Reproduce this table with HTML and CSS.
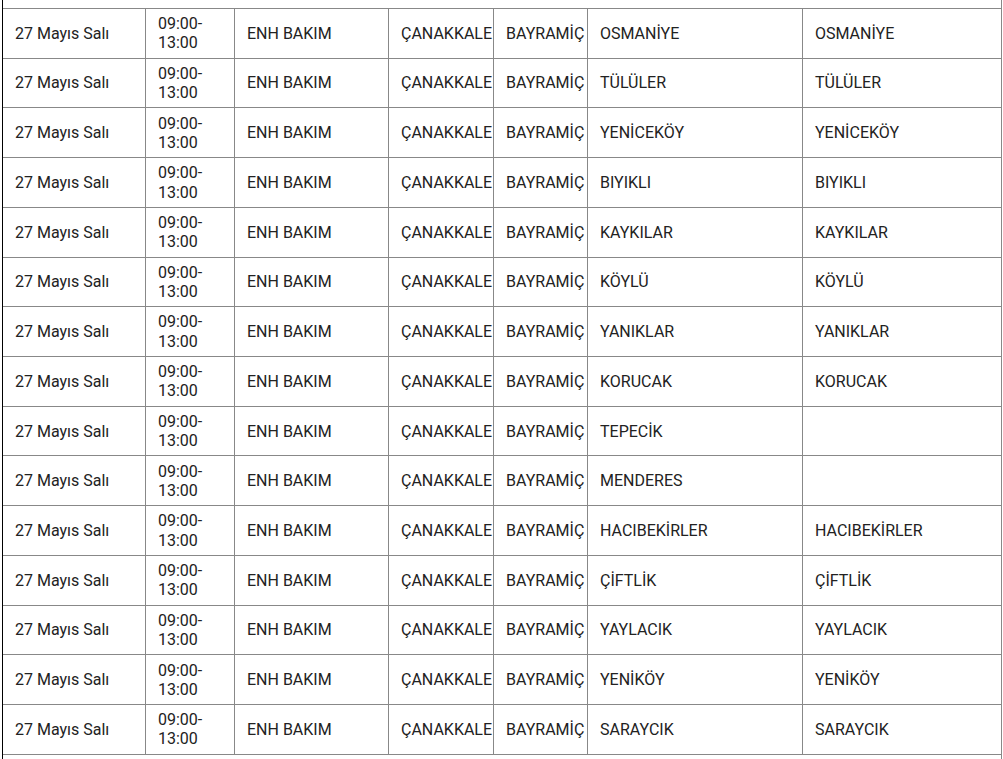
FILE: index.html
```html
<!DOCTYPE html>
<html lang="tr">
<head>
<meta charset="utf-8">
<title>Kesinti Listesi</title>
<link rel="stylesheet" href="styles.css">
</head>
<body>
<div class="wrap">
<table class="outages">
<tbody>
<tr><td>27 Mayıs Salı</td><td>09:00-13:00</td><td>ENH BAKIM</td><td>ÇANAKKALE</td><td>BAYRAMİÇ</td><td>OSMANİYE</td><td>OSMANİYE</td></tr>
<tr><td>27 Mayıs Salı</td><td>09:00-13:00</td><td>ENH BAKIM</td><td>ÇANAKKALE</td><td>BAYRAMİÇ</td><td>TÜLÜLER</td><td>TÜLÜLER</td></tr>
<tr><td>27 Mayıs Salı</td><td>09:00-13:00</td><td>ENH BAKIM</td><td>ÇANAKKALE</td><td>BAYRAMİÇ</td><td>YENİCEKÖY</td><td>YENİCEKÖY</td></tr>
<tr><td>27 Mayıs Salı</td><td>09:00-13:00</td><td>ENH BAKIM</td><td>ÇANAKKALE</td><td>BAYRAMİÇ</td><td>BIYIKLI</td><td>BIYIKLI</td></tr>
<tr><td>27 Mayıs Salı</td><td>09:00-13:00</td><td>ENH BAKIM</td><td>ÇANAKKALE</td><td>BAYRAMİÇ</td><td>KAYKILAR</td><td>KAYKILAR</td></tr>
<tr><td>27 Mayıs Salı</td><td>09:00-13:00</td><td>ENH BAKIM</td><td>ÇANAKKALE</td><td>BAYRAMİÇ</td><td>KÖYLÜ</td><td>KÖYLÜ</td></tr>
<tr><td>27 Mayıs Salı</td><td>09:00-13:00</td><td>ENH BAKIM</td><td>ÇANAKKALE</td><td>BAYRAMİÇ</td><td>YANIKLAR</td><td>YANIKLAR</td></tr>
<tr><td>27 Mayıs Salı</td><td>09:00-13:00</td><td>ENH BAKIM</td><td>ÇANAKKALE</td><td>BAYRAMİÇ</td><td>KORUCAK</td><td>KORUCAK</td></tr>
<tr><td>27 Mayıs Salı</td><td>09:00-13:00</td><td>ENH BAKIM</td><td>ÇANAKKALE</td><td>BAYRAMİÇ</td><td>TEPECİK</td><td></td></tr>
<tr><td>27 Mayıs Salı</td><td>09:00-13:00</td><td>ENH BAKIM</td><td>ÇANAKKALE</td><td>BAYRAMİÇ</td><td>MENDERES</td><td></td></tr>
<tr><td>27 Mayıs Salı</td><td>09:00-13:00</td><td>ENH BAKIM</td><td>ÇANAKKALE</td><td>BAYRAMİÇ</td><td>HACIBEKİRLER</td><td>HACIBEKİRLER</td></tr>
<tr><td>27 Mayıs Salı</td><td>09:00-13:00</td><td>ENH BAKIM</td><td>ÇANAKKALE</td><td>BAYRAMİÇ</td><td>ÇİFTLİK</td><td>ÇİFTLİK</td></tr>
<tr><td>27 Mayıs Salı</td><td>09:00-13:00</td><td>ENH BAKIM</td><td>ÇANAKKALE</td><td>BAYRAMİÇ</td><td>YAYLACIK</td><td>YAYLACIK</td></tr>
<tr><td>27 Mayıs Salı</td><td>09:00-13:00</td><td>ENH BAKIM</td><td>ÇANAKKALE</td><td>BAYRAMİÇ</td><td>YENİKÖY</td><td>YENİKÖY</td></tr>
<tr><td>27 Mayıs Salı</td><td>09:00-13:00</td><td>ENH BAKIM</td><td>ÇANAKKALE</td><td>BAYRAMİÇ</td><td>SARAYCIK</td><td>SARAYCIK</td></tr>
</tbody>
</table>
</div>
</body>
</html>
```

FILE: styles.css
```css
html, body {
  margin: 0;
  padding: 0;
  background: #fff;
}

body {
  font-family: Roboto, "Liberation Sans", sans-serif;
  font-size: 16px;
  color: #222;
  overflow: hidden;
}

.wrap {
  margin-left: 2px;
  width: 1000px;
  box-sizing: border-box;
  border-left: 1px solid #000;
  border-right: 1px solid #888;
  padding-top: 8px;
  min-height: 800px;
}

.outages {
  width: 998px;
  table-layout: fixed;
  border-collapse: separate;
  border-spacing: 0;
  border-top: 1px solid #888;
}

.outages td {
  box-sizing: border-box;
  padding: 5.17px 12px;
  line-height: 19.2px;
  border-right: 1px solid #888;
  border-bottom: 1px solid #888;
  vertical-align: middle;
  text-align: left;
}

.outages td:nth-child(1) { width: 143px; }
.outages td:nth-child(2) { width: 89px; }
.outages td:nth-child(3) { width: 154px; }
.outages td:nth-child(4) { width: 105px; white-space: nowrap; }
.outages td:nth-child(5) { width: 94px; white-space: nowrap; }
.outages td:nth-child(6) { width: 215px; }
.outages td:nth-child(7) { width: 198px; border-right: none; }
```
